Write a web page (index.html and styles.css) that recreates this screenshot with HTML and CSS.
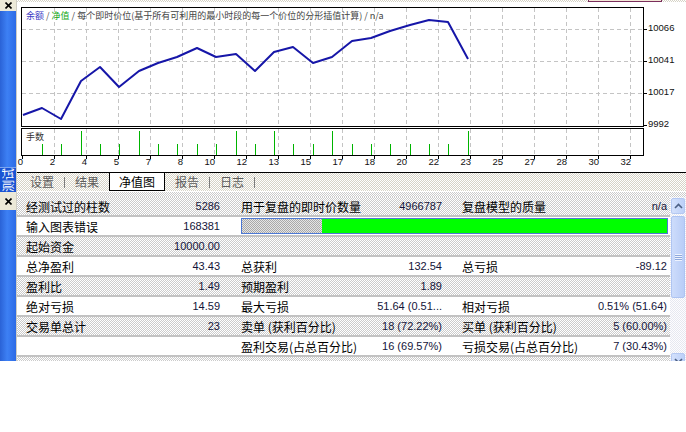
FILE: index.html
```html
<!DOCTYPE html>
<html lang="zh-CN">
<head>
    <meta charset="UTF-8">
    <meta name="viewport" content="width=device-width, initial-scale=1.0">
    <title>策略测试 - 净值图</title>
    <link rel="stylesheet" href="styles.css">
</head>
<body>
    <div class="app">
        <div class="sidebar">
            <div class="close">
                <svg width="7" height="7" viewBox="0 0 7 7"><path d="M0.5 0.5L6.5 6.5M6.5 0.5L0.5 6.5" stroke="#000" stroke-width="1.6"/></svg>
            </div>
            <div class="bar bar-top"></div>
            <div class="vtab"><span>测试</span></div>
            <div class="close close-lower">
                <svg width="7" height="7" viewBox="0 0 7 7"><path d="M0.5 0.5L6.5 6.5M6.5 0.5L0.5 6.5" stroke="#000" stroke-width="1.6"/></svg>
            </div>
            <div class="bar bar-bottom"></div>
        </div>

        <div class="main">
            <div class="topstrip"><div class="topstrip-box"></div></div>

            <svg class="chart" width="669" height="170" viewBox="17 2 669 170">
                <!-- сетка -->
                <path class="grid" d="M54.5 8V126M86.5 8V126M118.5 8V126M150.5 8V126M182.5 8V126M214.5 8V126M246.5 8V126M278.5 8V126M310.5 8V126M342.5 8V126M374.5 8V126M406.5 8V126M438.5 8V126M470.5 8V126M502.5 8V126M534.5 8V126M566.5 8V126M598.5 8V126M630.5 8V126"/>
                <path class="grid" d="M54.5 129V155M86.5 129V155M118.5 129V155M150.5 129V155M182.5 129V155M214.5 129V155M246.5 129V155M278.5 129V155M310.5 129V155M342.5 129V155M374.5 129V155M406.5 129V155M438.5 129V155M470.5 129V155M502.5 129V155M534.5 129V155M566.5 129V155M598.5 129V155M630.5 129V155"/>
                <path class="grid" d="M22 29.5H643M22 61.5H643M22 93.5H643"/>

                <rect class="frame" x="21.5" y="7.5" width="622" height="119"/>
                <rect class="frame" x="21.5" y="128.5" width="622" height="27"/>

                <path class="tick" d="M22.5 156V159M54.5 156V159M86.5 156V159M118.5 156V159M150.5 156V159M182.5 156V159M214.5 156V159M246.5 156V159M278.5 156V159M310.5 156V159M342.5 156V159M374.5 156V159M406.5 156V159M438.5 156V159M470.5 156V159M502.5 156V159M534.5 156V159M566.5 156V159M598.5 156V159M630.5 156V159"/>
                <path class="tick" d="M644 29.5H647M644 61.5H647M644 93.5H647M644 125.5H647"/>

                <text class="legend" x="26" y="19"><tspan fill="#3a3ac4">余额</tspan><tspan fill="#555"> / </tspan><tspan fill="#14a814">净值</tspan><tspan fill="#444"> / 每个即时价位(基于所有可利用的最小时段的每一个价位的分形插值计算) / n/a</tspan></text>

                <polyline class="equity" points="23,115 42,108 61,119 81,81 100,67 119,87 139,71 158,63 177,57 197,48 216,57 236,54 255,71 274,52 293,47 313,63 332,57 352,41 371,38 390,31 410,25 429,20 448,22 468,59"/>

                <text class="sublabel" x="26" y="140">手数</text>
                <path class="lots" d="M81.5 131V155M139.5 131V155M236.5 131V155M274.5 131V155M332.5 131V155M468.5 131V155"/>
                <path class="lots" d="M42.5 144V155M61.5 144V155M100.5 144V155M119.5 144V155M158.5 144V155M177.5 144V155M197.5 144V155M216.5 144V155M255.5 144V155M293.5 144V155M313.5 144V155M352.5 144V155M371.5 144V155M390.5 144V155M410.5 144V155M429.5 144V155M448.5 144V155"/>

                <g class="axis-y">
                    <text x="648" y="31">10066</text>
                    <text x="648" y="63">10041</text>
                    <text x="648" y="95">10017</text>
                    <text x="648" y="127">9992</text>
                </g>
                <g class="axis-x">
                    <text x="23" y="165" text-anchor="start">0</text>
                    <text x="55" y="165">2</text>
                    <text x="87" y="165">4</text>
                    <text x="119" y="165">5</text>
                    <text x="151" y="165">7</text>
                    <text x="183" y="165">8</text>
                    <text x="215" y="165">10</text>
                    <text x="247" y="165">12</text>
                    <text x="279" y="165">13</text>
                    <text x="311" y="165">15</text>
                    <text x="343" y="165">17</text>
                    <text x="375" y="165">18</text>
                    <text x="407" y="165">20</text>
                    <text x="439" y="165">22</text>
                    <text x="471" y="165">23</text>
                    <text x="503" y="165">25</text>
                    <text x="535" y="165">27</text>
                    <text x="567" y="165">28</text>
                    <text x="599" y="165">30</text>
                    <text x="631" y="165">32</text>
                </g>
            </svg>

            <div class="tabs">
                <div class="tab">设置</div>
                <div class="sep"></div>
                <div class="tab">结果</div>
                <div class="tab active">净值图</div>
                <div class="tab">报告</div>
                <div class="sep"></div>
                <div class="tab">日志</div>
                <div class="sep"></div>
            </div>

            <div class="report">
                <div class="report-head"></div>
                <div class="report-body">
                    <div class="report-table">
                        <div class="row dots">
                            <div class="cell c1"><span>经测试过的柱数</span><span class="num">5286</span></div>
                            <div class="cell c2"><span>用于复盘的即时价数量</span><span class="num">4966787</span></div>
                            <div class="cell c3"><span>复盘模型的质量</span><span class="num">n/a</span></div>
                        </div>
                        <div class="row">
                            <div class="cell c1"><span>输入图表错误</span><span class="num">168381</span></div>
                            <div class="progress">
                                <div class="progress-empty"></div>
                                <div class="progress-fill"></div>
                            </div>
                        </div>
                        <div class="row dots">
                            <div class="cell c1"><span>起始资金</span><span class="num">10000.00</span></div>
                            <div class="cell c2"></div>
                            <div class="cell c3"></div>
                        </div>
                        <div class="row">
                            <div class="cell c1"><span>总净盈利</span><span class="num">43.43</span></div>
                            <div class="cell c2"><span>总获利</span><span class="num">132.54</span></div>
                            <div class="cell c3"><span>总亏损</span><span class="num">-89.12</span></div>
                        </div>
                        <div class="row dots">
                            <div class="cell c1"><span>盈利比</span><span class="num">1.49</span></div>
                            <div class="cell c2"><span>预期盈利</span><span class="num">1.89</span></div>
                            <div class="cell c3"></div>
                        </div>
                        <div class="row">
                            <div class="cell c1"><span>绝对亏损</span><span class="num">14.59</span></div>
                            <div class="cell c2"><span>最大亏损</span><span class="num">51.64 (0.51...</span></div>
                            <div class="cell c3"><span>相对亏损</span><span class="num">0.51% (51.64)</span></div>
                        </div>
                        <div class="row dots">
                            <div class="cell c1"><span>交易单总计</span><span class="num">23</span></div>
                            <div class="cell c2"><span>卖单 (获利百分比)</span><span class="num">18 (72.22%)</span></div>
                            <div class="cell c3"><span>买单 (获利百分比)</span><span class="num">5 (60.00%)</span></div>
                        </div>
                        <div class="row">
                            <div class="cell c1"></div>
                            <div class="cell c2"><span>盈利交易(占总百分比)</span><span class="num">16 (69.57%)</span></div>
                            <div class="cell c3"><span>亏损交易(占总百分比)</span><span class="num">7 (30.43%)</span></div>
                        </div>
                        <div class="row-end"></div>
                    </div>

                    <div class="scrollbar">
                        <div class="sb-btn">
                            <svg width="9" height="6" viewBox="0 0 9 6"><polyline points="1,5 4.5,1.5 8,5" fill="none" stroke="#4d6185" stroke-width="1.6"/></svg>
                        </div>
                        <div class="sb-thumb">
                            <div class="grip"></div>
                        </div>
                        <div class="sb-track"></div>
                        <div class="sb-btn sb-down">
                            <svg width="9" height="6" viewBox="0 0 9 6"><polyline points="1,1 4.5,4.5 8,1" fill="none" stroke="#4d6185" stroke-width="1.6"/></svg>
                        </div>
                    </div>
                </div>
            </div>
        </div>
    </div>
</body>
</html>
```

FILE: styles.css
```css
body {
    margin: 0;
    background: #fff;
    font-family: "Noto Sans CJK SC", sans-serif;
    color: #000;
}
.app {
    display: flex;
    width: 686px;
    height: 361px;
}
.sidebar {
    width: 16px;
    display: flex;
    flex-direction: column;
    border-right: 1px solid #cfcdc4;
}
.close {
    height: 11px;
    background: #ece9d8;
    display: flex;
    align-items: center;
    justify-content: center;
}
.close-lower {
    height: 18px;
}
.bar {
    background: linear-gradient(to right, #2a62d6, #3d80f4 45%, #2d6be6);
}
.bar-top {
    height: 156px;
}
.bar-bottom {
    flex: 1;
}
.vtab {
    height: 25px;
    background: #1a54d4;
    border-top: 1px solid #7aa4f0;
    box-sizing: border-box;
    display: flex;
    align-items: center;
    justify-content: center;
    color: #fff;
    font-size: 12px;
}
.vtab span {
    transform: rotate(-90deg);
    white-space: nowrap;
    line-height: 12px;
}
.main {
    flex: 1;
    display: flex;
    flex-direction: column;
    min-width: 0;
}
.topstrip {
    height: 2px;
    background: repeating-conic-gradient(#d6d3c6 0 25%, #fff 0 50%) 0 0 / 2px 2px;
    padding-left: 571px;
}
.topstrip-box {
    width: 72px;
    height: 1px;
    border: 1px solid #7a2e5c;
    border-top: none;
    background: #f3e8d8;
}
.chart {
    display: block;
}
.grid {
    fill: none;
    stroke: #c4c4c4;
    stroke-width: 1;
    stroke-dasharray: 4 3;
}
.frame {
    fill: none;
    stroke: #000;
    stroke-width: 1;
}
.tick {
    fill: none;
    stroke: #000;
    stroke-width: 1;
}
.legend {
    font-family: "Noto Sans CJK SC", sans-serif;
    font-size: 9px;
}
.sublabel {
    font-family: "Noto Sans CJK SC", sans-serif;
    font-size: 9px;
    fill: #333;
}
.equity {
    fill: none;
    stroke: #1616a8;
    stroke-width: 2;
    stroke-linejoin: round;
}
.lots {
    fill: none;
    stroke: #00b400;
    stroke-width: 1;
}
.axis-y text,
.axis-x text {
    font-family: "Liberation Sans", Arial, sans-serif;
    font-size: 9.5px;
    fill: #111;
}
.axis-x text {
    text-anchor: end;
}
.tabs {
    display: flex;
    height: 18px;
    border-top: 1px solid #000;
    border-bottom: 1px solid #fff;
    padding-left: 3px;
    background: repeating-conic-gradient(#d6d3c6 0 25%, #fff 0 50%) 0 0 / 2px 2px;
    font-size: 12px;
    line-height: 17px;
    color: #5c5c5c;
}
.tab {
    padding: 0 10px 0 10px;
}
.tab.active {
    height: 18px;
    box-sizing: border-box;
    padding: 0 9px;
    background: #fff;
    color: #000;
    border: 1px solid #000;
    border-top: none;
}
.sep {
    width: 1px;
    height: 11px;
    margin-top: 4px;
    background: #7c7c7c;
}
.report {
    flex: 1;
    display: flex;
    flex-direction: column;
}
.report-head {
    height: 5px;
    background: repeating-conic-gradient(#cbcbcb 0 25%, #fff 0 50%) 0 0 / 2px 2px;
}
.report-body {
    flex: 1;
    display: flex;
    overflow: hidden;
}
.report-table {
    flex: 1;
}
.row {
    display: grid;
    grid-template-columns: 215px 221px 208px;
    padding-left: 9px;
    height: 18px;
    border-bottom: 2px solid #c2c2c2;
    font-size: 12px;
    line-height: 19px;
}
.dots,
.row-end {
    background: repeating-conic-gradient(#cbcbcb 0 25%, #fff 0 50%) 0 0 / 2px 2px;
}
.row-end {
    height: 4px;
}
.cell {
    display: flex;
    justify-content: space-between;
    white-space: nowrap;
}
.c1 {
    padding-right: 21px;
}
.c2 {
    padding-right: 20px;
}
.c3 {
    padding-right: 3px;
}
.num {
    font-family: "Liberation Sans", Arial, sans-serif;
    font-size: 11px;
    color: #14143a;
}
.progress {
    grid-column: 2 / 4;
    display: flex;
    height: 16px;
    margin: 1px 2px 1px 0;
    box-sizing: border-box;
    border: 1px solid #4c78d4;
}
.progress-empty {
    width: 80px;
    background: repeating-conic-gradient(#a8a8a8 0 25%, #e4e4e4 0 50%) 0 0 / 2px 2px;
}
.progress-fill {
    flex: 1;
    background: #00ff00;
}
.scrollbar {
    width: 16px;
    display: flex;
    flex-direction: column;
    background: repeating-conic-gradient(#e6e8f0 0 25%, #fdfdff 0 50%) 0 0 / 2px 2px;
}
.sb-btn {
    height: 16px;
    box-sizing: border-box;
    margin: 1px 1px 0 1px;
    border: 1px solid #b4c8f2;
    border-radius: 2px;
    background: linear-gradient(to right, #d4e1fc, #bcd0f8);
    display: flex;
    align-items: center;
    justify-content: center;
}
.sb-down {
    margin-bottom: -8px;
}
.sb-thumb {
    height: 82px;
    margin: 2px 1px 0 1px;
    box-sizing: border-box;
    border: 1px solid #aec4f2;
    border-radius: 2px;
    background: linear-gradient(to right, #cddcfb, #b9cdf7);
    display: flex;
    align-items: center;
    justify-content: center;
}
.grip {
    width: 7px;
    height: 7px;
    background: repeating-linear-gradient(to bottom, #eef3fe 0 1px, #8ea8dc 1px 2px);
}
.sb-track {
    flex: 1;
}
```
